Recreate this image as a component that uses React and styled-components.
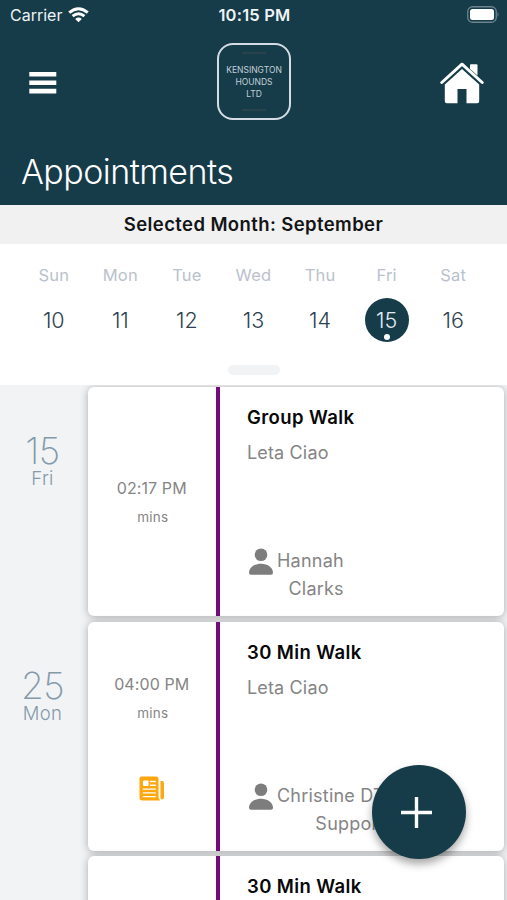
import React from "react";
import styled, { createGlobalStyle } from "styled-components";

const GlobalStyle = createGlobalStyle`
  * { box-sizing: border-box; }
  body { margin: 0; background: #f2f3f5; }
  svg { display: block; }
`;

const Screen = styled.div`
  position: relative;
  width: 507px;
  height: 900px;
  overflow: hidden;
  display: flex;
  flex-direction: column;
  background: #f2f3f5;
  font-family: Inter, "Liberation Sans", sans-serif;
`;

const Header = styled.header`
  height: 205px;
  flex: none;
  background: #163b49;
  color: #fff;
`;

const StatusBar = styled.div`
  height: 30px;
  padding: 0 8px 0 10px;
  display: grid;
  grid-template-columns: 1fr auto 1fr;
  align-items: center;
  font-size: 16px;
  line-height: 30px;
  color: #eef3f6;
`;

const Carrier = styled.div`
  display: flex;
  align-items: center;
  gap: 6px;
`;

const Clock = styled.div`
  font-size: 16.5px;
  font-weight: 600;
  letter-spacing: 0.2px;
`;

const BatterySlot = styled.div`
  display: flex;
  justify-content: flex-end;
  padding-bottom: 2px;
`;

const NavBar = styled.nav`
  height: 105px;
  padding: 0 23px 0 29px;
  display: grid;
  grid-template-columns: 1fr auto 1fr;
  align-items: center;
`;

const Logo = styled.div`
  width: 74px;
  height: 77px;
  margin: -2px 0 0 -5px;
  display: flex;
  flex-direction: column;
  align-items: center;
  justify-content: space-between;
  padding: 7px 0;
  border: 2px solid #d5dce5;
  border-radius: 16px;
`;

const LogoRule = styled.i`
  width: 24px;
  height: 2px;
  background: #2a424b;
`;

const LogoText = styled.div`
  text-align: center;
  font-size: 8.5px;
  line-height: 12px;
  color: #c3d0d8;
`;

const HomeSlot = styled.div`
  display: flex;
  justify-content: flex-end;
`;

const Title = styled.h1`
  margin: 0;
  padding: 15px 0 0 21px;
  font-weight: 350;
  font-size: 34px;
  line-height: 44px;
  letter-spacing: -0.55px;
`;

const MonthBar = styled.div`
  height: 39px;
  flex: none;
  background: #f1f1f1;
  text-align: center;
  font-size: 18.5px;
  font-weight: 600;
  letter-spacing: 0.4px;
  line-height: 39px;
  color: #131416;
`;

const Calendar = styled.section`
  height: 141px;
  flex: none;
  background: #fff;
  display: flex;
  flex-direction: column;
  align-items: center;
`;

const Week = styled.div`
  width: 466px;
  margin-top: 21px;
  display: grid;
  grid-template-columns: repeat(7, 1fr);
  justify-items: center;
`;

const Day = styled.div`
  display: flex;
  flex-direction: column;
  align-items: center;
  gap: 12px;
`;

const DayName = styled.span`
  font-size: 16.5px;
  line-height: 21px;
  letter-spacing: 0.2px;
  color: #b9c2cc;
`;

const DayNumber = styled.div`
  width: 44px;
  height: 44px;
  border-radius: 50%;
  display: flex;
  flex-direction: column;
  align-items: center;
  padding-top: 9px;
  font-size: 21.5px;
  line-height: 26px;
  font-weight: 300;
  color: ${(p) => (p.$selected ? "#e3edf2" : "#2d4150")};
  background: ${(p) => (p.$selected ? "#163b49" : "transparent")};
`;

const EventDot = styled.i`
  width: 6px;
  height: 6px;
  margin-top: 1px;
  flex: none;
  border-radius: 50%;
  background: #fff;
`;

const Knob = styled.div`
  width: 52px;
  height: 10px;
  margin-top: 23px;
  border-radius: 5px;
  background: #f2f3f4;
`;

const Agenda = styled.main`
  flex: 1;
  min-height: 0;
  overflow: hidden;
  padding-top: 2px;
  display: flex;
  flex-direction: column;
  gap: 5.5px;
`;

const Entry = styled.div`
  display: grid;
  grid-template-columns: 88px 416px;
  flex: none;
  height: 229px;
`;

const DateColumn = styled.div`
  padding: 44px 3px 0 0;
  text-align: center;
  color: #849aaa;
`;

const DateNumber = styled.div`
  font-size: 37px;
  font-weight: 200;
  line-height: 39px;
  letter-spacing: -0.5px;
`;

const DateName = styled.div`
  font-size: 18.5px;
  line-height: 16px;
  font-weight: 300;
  letter-spacing: 0.3px;
`;

const Card = styled.article`
  display: grid;
  grid-template-columns: 127.5px 4px 1fr;
  background: #fff;
  border-radius: 6px;
  box-shadow: 0 1px 8px rgba(0, 0, 0, 0.3);
`;

const TimeColumn = styled.div`
  display: flex;
  flex-direction: column;
  align-items: center;
  justify-content: ${(p) => (p.$note ? "flex-start" : "center")};
  padding-top: ${(p) => (p.$note ? "50px" : "0")};
  color: #858585;
`;

const Time = styled.div`
  font-size: 16px;
  line-height: 25px;
  letter-spacing: 0.1px;
`;

const Duration = styled.div`
  margin: 6px 0 0 2px;
  font-size: 13.5px;
  line-height: 20px;
  letter-spacing: 0.2px;
`;

const NoteSlot = styled.div`
  margin-top: 53px;
`;

const Stripe = styled.div`
  background: #740b78;
`;

const Details = styled.div`
  padding: 17px 0 0 27.5px;
`;

const Service = styled.h2`
  margin: 0;
  font-size: 18.5px;
  font-weight: 600;
  line-height: 26px;
  letter-spacing: 0.4px;
  color: #080808;
`;

const Client = styled.div`
  margin-top: 10px;
  font-size: 18px;
  line-height: 26px;
  letter-spacing: 0.15px;
  color: #858585;
`;

const Walker = styled.div`
  margin-top: 81px;
  padding-left: 2px;
  display: flex;
  gap: 4px;
`;

const WalkerName = styled.div`
  text-align: right;
  font-size: 18px;
  line-height: 28px;
  letter-spacing: 0.22px;
  color: #858585;
`;

const AddButton = styled.button`
  position: absolute;
  right: 41px;
  bottom: 41px;
  width: 94px;
  height: 94px;
  padding: 0 5px 0 0;
  display: flex;
  align-items: center;
  justify-content: center;
  border: 0;
  border-radius: 50%;
  background: #163b49;
  box-shadow: 0 5px 9px rgba(0, 0, 0, 0.35);
`;

const WifiIcon = () => (
  <svg width="21" height="16" viewBox="0 0 21 16" fill="none" stroke="#fff" strokeWidth="2.9">
    <path d="M1.2 5.7Q10.5-2.2 19.8 5.7M4.6 9.2Q10.5 4.1 16.4 9.2" />
    <path d="M7.2 12Q10.5 9.2 13.8 12L10.5 15.3Z" fill="#fff" stroke="none" />
  </svg>
);

const BatteryIcon = () => (
  <svg width="33" height="17" viewBox="0 0 33 17">
    <rect x="1.75" y=".75" width="28.5" height="15.5" rx="4.8" fill="none" stroke="#6d848e" strokeWidth="1.3" />
    <rect x="4" y="3" width="24" height="11" rx="2.5" fill="#fff" />
    <path d="M31.5 6v5q2-2.5 0-5Z" fill="#6d848e" />
  </svg>
);

const MenuIcon = () => (
  <svg width="28" height="22" viewBox="0 0 28 22" fill="#fff">
    <path d="M.3 0h27v4.6H.3zM.3 8.4h27V13H.3zM.3 16.8h27v4.6H.3z" />
  </svg>
);

const HomeIcon = () => (
  <svg width="44" height="42" viewBox="0 0 44 42" fill="#fff">
    <path d="M1.8 20.5 22 2.2l20.2 18.3" fill="none" stroke="#fff" strokeWidth="3" strokeLinecap="round" strokeLinejoin="round" />
    <path d="M30 3.2q0-1 1-1h5.5q1 0 1 1v10.4L30 7Z" />
    <path d="M22 7 39.2 22.6v16.7q0 2-2 2H26.5V27h-9v14.3H6.8q-2 0-2-2V22.6Z" />
  </svg>
);

const PersonIcon = () => (
  <svg width="24" height="28" viewBox="0 0 24 28" fill="#7d7d7d">
    <circle cx="12" cy="7.8" r="6.3" />
    <path d="M0 25.8c0-5 5-9 12-9s12 4 12 9q0 2-2 2H2q-2 0-2-2Z" />
  </svg>
);

const NewsIcon = () => (
  <svg width="26" height="25" viewBox="0 0 26 25">
    <path d="M2.5.5h15q2 0 2 2v19.3l1.8 2.7H3.5q-3 0-3-3v-19q0-2 2-2Z" fill="#ffa70f" />
    <path d="M21.5 5H23q2 0 2 2v14q0 2.5-1.8 2.5T21.5 21Z" fill="#ffa70f" />
    <rect x="4" y="4.5" width="5.6" height="5.6" rx="1" fill="#fff" />
    <path d="M11.5 5.5h4.7M11.5 9.3h4.7M4.3 13.1h12M4.3 16.9h12M4.3 20.6h12" stroke="#fff" strokeWidth="1.4" strokeLinecap="round" />
  </svg>
);

const PlusIcon = () => (
  <svg width="31" height="31" viewBox="0 0 31 31" stroke="#fff" strokeWidth="3.4">
    <path d="M15.5 0v31M0 15.5h31" />
  </svg>
);

const week = [["Sun", 10], ["Mon", 11], ["Tue", 12], ["Wed", 13], ["Thu", 14], ["Fri", 15], ["Sat", 16]];

const appointments = [
  { date: 15, day: "Fri", time: "02:17 PM", service: "Group Walk", walker: ["Hannah", "Clarks"] },
  { date: 25, day: "Mon", time: "04:00 PM", service: "30 Min Walk", walker: ["Christine DT", "Support"], note: true },
  { service: "30 Min Walk" },
];

const Appointment = ({ item }) => (
  <Entry>
    <DateColumn>
      {item.date && <DateNumber>{item.date}</DateNumber>}
      {item.day && <DateName>{item.day}</DateName>}
    </DateColumn>
    <Card>
      <TimeColumn $note={item.note}>
        {item.time && <Time>{item.time}</Time>}
        {item.time && <Duration>mins</Duration>}
        {item.note && <NoteSlot><NewsIcon /></NoteSlot>}
      </TimeColumn>
      <Stripe />
      <Details>
        <Service>{item.service}</Service>
        {item.walker && (
          <>
            <Client>Leta Ciao</Client>
            <Walker>
              <PersonIcon />
              <WalkerName>
                {item.walker.map((line) => <div key={line}>{line}</div>)}
              </WalkerName>
            </Walker>
          </>
        )}
      </Details>
    </Card>
  </Entry>
);

export default function App() {
  return (
    <Screen>
      <GlobalStyle />
      <Header>
        <StatusBar>
          <Carrier>Carrier <WifiIcon /></Carrier>
          <Clock>10:15 PM</Clock>
          <BatterySlot><BatteryIcon /></BatterySlot>
        </StatusBar>
        <NavBar>
          <MenuIcon />
          <Logo>
            <LogoRule />
            <LogoText>KENSINGTON<br />HOUNDS<br />LTD</LogoText>
            <LogoRule />
          </Logo>
          <HomeSlot><HomeIcon /></HomeSlot>
        </NavBar>
        <Title>Appointments</Title>
      </Header>
      <MonthBar>Selected Month: September</MonthBar>
      <Calendar>
        <Week>
          {week.map(([name, number]) => (
            <Day key={name}>
              <DayName>{name}</DayName>
              <DayNumber $selected={number === 15}>
                {number}
                {number === 15 && <EventDot />}
              </DayNumber>
            </Day>
          ))}
        </Week>
        <Knob />
      </Calendar>
      <Agenda>
        {appointments.map((item, index) => <Appointment key={index} item={item} />)}
      </Agenda>
      <AddButton aria-label="Add appointment"><PlusIcon /></AddButton>
    </Screen>
  );
}
